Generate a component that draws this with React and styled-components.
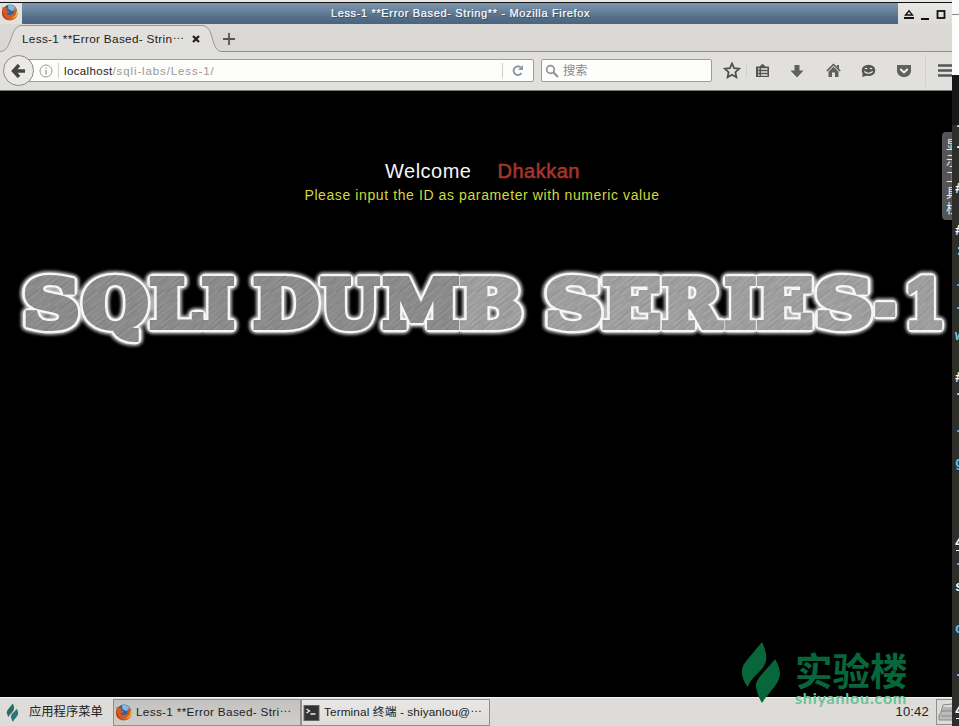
import React from "react";
import styled, { createGlobalStyle } from "styled-components";

const Global = createGlobalStyle`
  * { box-sizing: border-box; }
  html, body { margin: 0; background: #000; }
  body {
    width: 959px; height: 726px; overflow: hidden;
    font-family: "Liberation Sans", "Noto Sans CJK SC", sans-serif;
    font-size: 12px; color: #222;
  }
  svg { display: block; flex: none; }
`;

const Screen = styled.div`
  position: relative;
  display: grid;
  grid-template-columns: 952px 7px;
  width: 959px;
  height: 726px;
  overflow: hidden;
`;
const Desktop = styled.div`
  display: flex;
  flex-direction: column;
  width: 952px;
  height: 726px;
  overflow: hidden;
  background: #000;
`;
const Label = styled.span`
  font-size: ${(p) => p.$size || 12}px;
  letter-spacing: ${(p) => p.$track || 0}px;
  color: ${(p) => p.$color || "#222"};
  -webkit-text-stroke: ${(p) => p.$bold || 0}px currentColor;
  white-space: pre;
  line-height: 1.2;
`;
const Dots = styled.span`
  line-height: 0;
  vertical-align: 4px;
  letter-spacing: 0;
`;

/* title bar */
const TitleBar = styled.header`
  display: flex;
  flex: none;
  height: 24px;
  border-top: 2px solid #e9e9e7;
  background: #deddd9;
`;
const TitleIcon = styled.div`
  width: 22px;
  height: 22px;
  border-top: 1px solid #111;
  background: #e2e1dd;
  padding: 1px 0 0 1px;
`;
const TitleFill = styled.div`
  flex: 1;
  display: flex;
  justify-content: center;
  align-items: center;
  padding-left: 1px;
  border-top: 1px solid #111;
  background: linear-gradient(#7e95ad, #6b849e 35%, #56708b 65%, #4a6480);
  text-shadow: 1px 1px 1px #34485c;
`;
const WindowButtons = styled.div`
  width: 54px;
  display: flex;
  align-items: center;
  gap: 5px;
  padding-left: 5px;
  border-top: 1px solid #111;
  background: linear-gradient(#e9e8e5, #dcdbd7);
`;

/* tabs */
const TabStrip = styled.div`
  display: flex;
  flex: none;
  height: 28px;
  background: #d9d8d5;
  border-bottom: 1px solid #8f8f8c;
`;
const Tab = styled.div`
  position: relative;
  width: 222px;
  height: 28px;
  display: flex;
  align-items: center;
  padding: 2px 0 0 22px;
  gap: 8px;
  & > svg.shape { position: absolute; left: 0; top: 0; }
  & > span, & > svg:not(.shape) { position: relative; }
`;
const NewTab = styled.div`
  padding: 9px 0 0 1px;
`;

/* navigation */
const NavBar = styled.div`
  display: flex;
  flex: none;
  height: 39px;
  align-items: center;
  background: #e1e0dc;
  border-bottom: 1px solid #777;
  padding: 0 0 1px 3px;
`;
const BackButton = styled.div`
  position: relative;
  z-index: 1;
  flex: none;
  width: 31px;
  height: 31px;
  display: grid;
  place-items: center;
  border: 1px solid #8a8a88;
  border-radius: 50%;
  background: #eae9e6;
`;
const Field = styled.div`
  flex: none;
  width: ${(p) => p.$width}px;
  height: 23px;
  display: flex;
  align-items: center;
  border: 1px solid #9c9c99;
  border-radius: 2px;
  background: #fdfdfc;
  & > span { padding-top: 2px; }
`;
const UrlField = styled(Field)`
  margin-left: -9px;
  padding: 0 9px 0 13px;
`;
const SearchField = styled(Field)`
  margin-left: 7px;
  padding-left: 3px;
  gap: 4px;
`;
const Divider = styled.i`
  width: 1px;
  height: ${(p) => p.$height || 15}px;
  margin: 0 ${(p) => p.$right || 0}px 0 ${(p) => p.$left || 0}px;
  background: #cfcfcc;
`;
const Spacer = styled.i`
  flex: 1;
`;
const Tools = styled.div`
  display: flex;
  align-items: center;
  margin-left: 11px;
`;
const Tool = styled.div`
  width: ${(p) => p.$width || 36}px;
  flex: none;
`;

/* page */
const Page = styled.main`
  flex: 1;
  background: #000;
  display: flex;
  flex-direction: column;
  align-items: center;
  padding-top: 67px;
`;
const Greeting = styled.div`
  display: flex;
  gap: 26px;
  width: 194px;
  height: 26px;
  margin-left: 12px;
  align-items: center;
`;
const Hint = styled.div`
  height: 22px;
  margin-left: 12px;
  display: flex;
  align-items: center;
`;
const BannerBox = styled.div`
  margin-top: 51px;
  width: 952px;
  height: 100px;
`;

/* taskbar */
const TaskBar = styled.footer`
  display: flex;
  flex: none;
  height: 29px;
  align-items: stretch;
  background: #dddcd9;
  border-top: 1px solid #f5f5f3;
`;
const MenuButton = styled.div`
  width: 113px;
  display: flex;
  align-items: center;
  gap: 10px;
  padding-left: 6px;
`;
const Task = styled.div`
  width: ${(p) => p.$width}px;
  height: 27px;
  margin-top: 1px;
  display: flex;
  align-items: center;
  gap: 4px;
  padding-left: 1px;
  overflow: hidden;
  border: 1px solid #8f8f8c;
  background: ${(p) => (p.$active ? "linear-gradient(#c3c2be, #cfcecb)" : "linear-gradient(#e9e8e6, #dddcd9)")};
`;
const Clock = styled.div`
  display: flex;
  align-items: center;
  margin-right: 7px;
`;
const Tray = styled.div`
  width: 16px;
  height: 26px;
  margin-top: 1px;
  border: 1px solid #8f8f8c;
  border-right: 0;
  padding: 3px 0 0 1px;
  overflow: hidden;
`;

/* overlays */
const ToolTab = styled.aside`
  position: absolute;
  left: 942px;
  top: 132px;
  width: 10px;
  height: 88px;
  padding: 4px 0 0 4px;
  overflow: hidden;
  border-radius: 4px 0 0 4px;
  background: #555;
  color: #e8e8e8;
  font: 13px/16px "Noto Sans CJK SC", sans-serif;
  display: flex;
  flex-direction: column;
  & > span { width: 13px; flex: none; }
`;
const Watermark = styled.div`
  position: absolute;
  left: 740px;
  top: 640px;
  display: flex;
  gap: 13px;
  color: #07673b;
`;
const MarkText = styled.div`
  display: flex;
  flex-direction: column;
  width: 116px;
  padding-top: 9px;
`;
const MarkTitle = styled.span`
  font: 700 37.5px/40px "Noto Sans CJK SC", sans-serif;
  white-space: nowrap;
`;
const MarkDomain = styled.span`
  font: 700 16px/18px Lato, sans-serif;
  letter-spacing: 0.8px;
  color: #69c397;
  white-space: nowrap;
`;

/* neighbouring editor strip */
const SideStrip = styled.div`
  display: flex;
  flex-direction: column;
  width: 7px;
  overflow: hidden;
`;
const SideHead = styled.div`
  height: 75px;
  flex: none;
  background: linear-gradient(#fafafa 14px, #888 14px, #888 15px, #fdfdfd 15px);
`;
const SideBar = styled.div`
  height: 50px;
  flex: none;
  background: #181818;
`;
const SideCode = styled.div`
  flex: 1;
  background: #2d2d29;
`;

const Firefox = () => (
  <svg width="17" height="17" viewBox="0 0 17 17">
    <circle cx="9" cy="7.500" r="7" fill="#2f64a4" />
    <path d="M7 1.500c4-1.500 8 1 8 5-2-1-3 1-5 0L7.500 5Z" fill="#86bbe0" />
    <path d="M1.600 2.500 4 4.200 6.500 4 5.800 6.400 8.600 7.200 7.200 8.900 5.300 9.200C7 12 11 11.500 12.500 9c1-2 .6-3.800 0-5 2.600 1 4 3 4 5.600-.4 5-4 6.900-8 6.900-5 0-8-4-7.500-8.500Z" fill="#d65a20" />
    <path d="M14.300 4.500c2.600 5-.7 9.500-5.300 9.700 4 .8 7.300-1.500 7.500-5Z" fill="#edb33f" />
    <path d="M1.300 6C0 11 4 16 9 15.800 4 15 2 11 1.300 6Z" fill="#8f3025" />
  </svg>
);

const Flame = ({ width, height, fill = "#07673b", second = fill }) => (
  <svg width={width} height={height} viewBox="0 0 42 64">
    <path d="M22 2 7 20C1 27 1 33 3 38 4 42 6 45 8 47 9 42 13 38 20 31 27 24 29 17 22 2Z" fill={fill} />
    <path d="M35 19C33 22 29 26 22 34 15 42 15 46 17 51 18 56 20 60 22 63 25 58 29 54 35 46 41 38 42 31 35 19Z" fill={second} />
  </svg>
);

/* Banner letters: glyph, left ink edge, right ink edge */
const LETTERS = [
  ["S", 25, 78], ["Q", 82, 148], ["L", 150, 203], ["I", 202, 234],
  ["D", 254, 319], ["U", 320, 381], ["M", 382, 459], ["B", 460, 522],
  ["S", 547, 601], ["E", 603, 660], ["R", 662, 725], ["I", 725, 756],
  ["E", 757, 812], ["S", 817, 871], ["-", 874, 896], ["1", 908, 943],
];
const FONT_SIZE = 66;
const FONT = `900 ${FONT_SIZE}px "DejaVu Serif"`;
const WEIGHT = 6;

const fitLetter = ([char, left, right]) => {
  const ctx = document.createElement("canvas").getContext("2d");
  ctx.font = FONT;
  const m = ctx.measureText(char);
  const inkLeft = -m.actualBoundingBoxLeft;
  const ink = m.actualBoundingBoxRight - inkLeft;
  const sx = (right - left - WEIGHT) / ink;
  return `translate(${left + WEIGHT / 2 - inkLeft * sx} 69.800) scale(${sx} 1)`;
};

const Glyphs = ({ items, ...rest }) => (
  <g fontFamily="DejaVu Serif" fontWeight="900" fontSize={FONT_SIZE} strokeLinejoin="miter" {...rest}>
    {items.map(({ char, transform }, i) => (
      <text key={i} transform={transform}>{char}</text>
    ))}
  </g>
);

function Banner() {
  const items = LETTERS.map((l) => ({ char: l[0], transform: fitLetter(l) }));
  return (
    <svg width="952" height="100" viewBox="0 0 952 100">
      <defs>
        <pattern id="brushed" width="34" height="23" patternUnits="userSpaceOnUse" patternTransform="rotate(-42)">
          <rect width="34" height="23" fill="#8a8a8a" />
          <path d="M0 2H20M8 6H34M0 10H13M18 13H34M2 17H26M12 21H34" stroke="#999" strokeWidth=".8" />
          <path d="M14 4H34M0 8H19M6 15H22M0 19.500H12" stroke="#7c7c7c" strokeWidth=".8" />
        </pattern>
        <pattern id="brushedLight" width="34" height="23" patternUnits="userSpaceOnUse" patternTransform="rotate(-42)">
          <rect width="34" height="23" fill="#9d9d9d" />
          <path d="M0 2H20M8 6H34M0 10H13M18 13H34M2 17H26M12 21H34" stroke="#afafaf" strokeWidth=".8" />
          <path d="M14 4H34M0 8H19M6 15H22M0 19.500H12" stroke="#8e8e8e" strokeWidth=".8" />
        </pattern>
        <filter id="glow" x="-5%" y="-30%" width="110%" height="160%">
          <feGaussianBlur stdDeviation="1.400" />
        </filter>
      </defs>
      <Glyphs items={items} fill="#bbb" stroke="#bbb" strokeWidth={WEIGHT + 8} strokeLinejoin="round" filter="url(#glow)" />
      <Glyphs items={items} fill="#f6f6f6" stroke="#f6f6f6" strokeWidth={WEIGHT + 4.5} strokeLinejoin="round" />
      <Glyphs items={items.slice(0, 7)} fill="url(#brushed)" stroke="url(#brushed)" strokeWidth={WEIGHT} />
      <Glyphs items={items.slice(7)} fill="url(#brushedLight)" stroke="url(#brushedLight)" strokeWidth={WEIGHT} />
    </svg>
  );
}

/* Visible slivers of the code editor: y, text, colour */
const SLIVERS = [
  [130, "-", "#ddd"], [151, "-", "#fff"], [193, "#", "#fff"], [235, "#", "#fff"],
  [255, ":", "#ddd"], [289, "-", "#62b9ed"], [312, "-", "#62b9ed"], [340, "w", "#7bcbf7"],
  [382, "#", "#fff"], [398, "-", "#ddd"], [435, "-", "#62b9ed"], [467, "g", "#58bced"],
  [547, "4", "#fff"], [568, "-", "#aaf"], [591, "s", "#fff"], [633, "c", "#58bced"],
  [679, "-", "#89cfff"], [715, "4", "#fff"],
];

function Side() {
  return (
    <SideStrip>
      <SideHead />
      <SideBar />
      <SideCode>
        <svg width="7" height="601" viewBox="0 125 7 601" fontFamily="Liberation Mono" fontSize="14" fontWeight="700">
          {SLIVERS.map(([y, t, c]) => <text key={y} x="3" y={y} fill={c}>{t}</text>)}
          <path d="M4 550.500h3M4 718.500h3" stroke="#fff" />
        </svg>
      </SideCode>
    </SideStrip>
  );
}

export default function App() {
  return (
    <Screen>
      <Global />
      <Desktop>
        <TitleBar>
          <TitleIcon><Firefox /></TitleIcon>
          <TitleFill><Label $size={11} $track={0.65} $bold={0.2} $color="#fff">Less-1 **Error Based- String** - Mozilla Firefox</Label></TitleFill>
          <WindowButtons>
            <svg width="12" height="12" fill="none" stroke="#111"><path d="M2.500 7 6 2.800 9.500 7Z" strokeWidth="1.300" /><path d="M1 10h10" strokeWidth="2" /></svg>
            <svg width="11" height="12"><path d="M1 11h8" stroke="#111" strokeWidth="2" /></svg>
            <svg width="10" height="12"><rect x="1.500" y="3" width="7" height="7" fill="none" stroke="#111" strokeWidth="1.800" /></svg>
          </WindowButtons>
        </TitleBar>
        <TabStrip>
          <Tab>
            <svg className="shape" width="222" height="28">
              <path d="M0 27.500C13 27.500 9 1.500 22 1.500H202C215 1.500 210 27.500 222 27.500V28H0Z" fill="#e1e0dc" />
              <path d="M0 27.500C13 27.500 9 1.500 22 1.500H202C215 1.500 210 27.500 222 27.500" fill="none" stroke="#969693" />
            </svg>
            <Label $size={11.8} $track={0.3}>Less-1 **Error Based- Strin<Dots>…</Dots></Label>
            <svg width="8" height="8"><path d="m1 1 6 6M7 1 1 7" stroke="#222" strokeWidth="2.300" /></svg>
          </Tab>
          <NewTab><svg width="12" height="12"><path d="M6 0v12M0 6h12" stroke="#555" strokeWidth="1.800" /></svg></NewTab>
        </TabStrip>
        <NavBar>
          <BackButton>
            <svg width="15" height="14" fill="none" stroke="#444" strokeWidth="3.400"><path d="M8 1 2.500 7 8 13M3 7h11" /></svg>
          </BackButton>
          <UrlField $width={509}>
            <svg width="14" height="14" fill="none" stroke="#999"><circle cx="7" cy="7" r="6" /><path d="M7 6v4.500M7 3.500v1.300" strokeWidth="1.300" /></svg>
            <Divider $left={5} $right={5} />
            <Label $size={11.5} $track={0.35}>localhost</Label>
            <Label $size={11.5} $track={0.88} $color="#999">/sqli-labs/Less-1/</Label>
            <Spacer />
            <Divider $right={9} />
            <svg width="12" height="13" fill="none" stroke="#8795a5" strokeWidth="1.900"><path d="M9.500 9A4.300 4.300 0 1 1 8.600 3.300" /><path d="M11 1v5H6Z" fill="#8795a5" stroke="none" /></svg>
          </UrlField>
          <SearchField $width={171}>
            <svg width="14" height="14" fill="none" stroke="#929292"><circle cx="5.500" cy="5.500" r="3.800" strokeWidth="1.700" /><path d="m8.500 8.500 4.500 4.500" strokeWidth="2.200" /></svg>
            <Label $size={12.3} $color="#8a8a8a">搜索</Label>
          </SearchField>
          <Tools>
            <Tool $width={23}><svg width="18" height="17"><path d="m9 1.500 2.100 4.700 5 .5-3.700 3.500 1 5L9 12.700l-4.400 2.500 1-5-3.700-3.500 5-.5Z" fill="none" stroke="#505050" strokeWidth="1.800" /></svg></Tool>
            <Divider $right={8} />
            <Tool $width={35}><svg width="15" height="15"><path d="M1 3.500h3.500L7.500.8l3 2.700H14V14H1Z" fill="#555" /><path d="M3 6h1.500M6 6h6.500M3 9h1.500M6 9h6.500M3 12h1.500M6 12h6.500" stroke="#e4e3e0" strokeWidth="1.400" /></svg></Tool>
            <Tool $width={36}><svg width="14" height="14"><path d="M4.500 1h5v5.500h4L7 13.500.500 6.500h4Z" fill="#606060" /></svg></Tool>
            <Tool $width={35}><svg width="15" height="15"><path d="m.8 8 6.700-6.500L14.200 8" fill="none" stroke="#555" strokeWidth="1.500" /><path d="m2.500 8.500 5-4.700 5 4.700V14H9V9.500H6V14H2.500ZM11 2h2v4l-2-2Z" fill="#606060" /></svg></Tool>
            <Tool $width={35}><svg width="15" height="14"><ellipse cx="7.500" cy="6.400" rx="6.800" ry="5.700" fill="#555" /><path d="m1.700 9-.5 4L6 11.500" fill="#555" /><path d="M4 5q1-1.200 2 0M9 5q1-1.200 2 0M3.300 7.500q4 3.500 8.400 0" fill="none" stroke="#eee" strokeWidth="1.100" /></svg></Tool>
            <Tool $width={29}><svg width="16" height="14"><path d="M1 1h14v5.500c0 4-3 6.500-7 6.500s-7-2.500-7-6.500Z" fill="#606060" /><path d="m4.300 5 3.700 3.500L11.700 5" fill="none" stroke="#f0f0ee" strokeWidth="1.900" /></svg></Tool>
            <Divider $height={32} $right={12} />
            <svg width="15" height="13"><path d="M0 1.500h15M0 6.500h15M0 11.500h15" stroke="#555" strokeWidth="2.400" /></svg>
          </Tools>
        </NavBar>
        <Page>
          <Greeting>
            <Label $size={20} $track={0.5} $color="#f5f5f5">Welcome</Label>
            <Label $size={20} $track={0.5} $bold={0.6} $color="#a9332b">Dhakkan</Label>
          </Greeting>
          <Hint><Label $size={14} $track={0.6} $color="#d2d83c">Please input the ID as parameter with numeric value</Label></Hint>
          <BannerBox><Banner /></BannerBox>
        </Page>
        <TaskBar>
          <MenuButton>
            <Flame width={13} height={19} fill="#247068" second="#277876" />
            <Label $size={12.3}>应用程序菜单</Label>
          </MenuButton>
          <Task $width={188} $active>
            <Firefox />
            <Label $size={11.8} $track={0.3}>Less-1 **Error Based- Stri<Dots>…</Dots></Label>
          </Task>
          <Task $width={189}>
            <svg width="17" height="16"><rect width="15" height="15" x="1" y=".5" fill="#333" stroke="#666" /><path d="m3.500 4 3 2-3 2M7.500 9h5" fill="none" stroke="#eee" strokeWidth="1.300" /></svg>
            <Label $size={11.8} $track={0.1}>Terminal 终端 - shiyanlou@<Dots>…</Dots></Label>
          </Task>
          <Spacer />
          <Clock><Label $size={13} $track={0.2}>10:42</Label></Clock>
          <Tray>
            <svg width="18" height="20" fill="#bbb" stroke="#888"><path d="M5 2 14 1 18 9H3Z" fill="#ddd" /><path d="M1 12 4 8h14v9H1Z" /><path d="M3 13h15M5 5h10M4 7h10" /></svg>
          </Tray>
        </TaskBar>
      </Desktop>
      <Side />
      <ToolTab><span>显</span><span>示</span><span>工</span><span>具</span><span>栏</span></ToolTab>
      <Watermark>
        <Flame width={42} height={64} />
        <MarkText>
          <MarkTitle>实验楼</MarkTitle>
          <MarkDomain>shiyanlou.com</MarkDomain>
        </MarkText>
      </Watermark>
    </Screen>
  );
}
